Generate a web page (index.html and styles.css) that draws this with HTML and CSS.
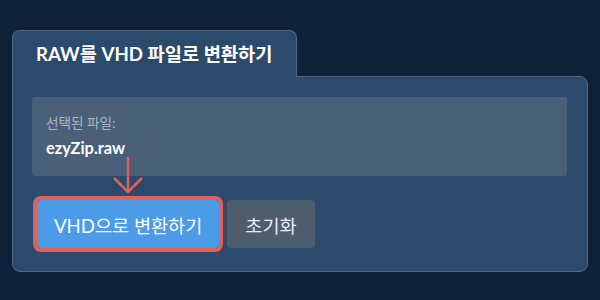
FILE: index.html
```html
<!DOCTYPE html>
<html lang="ko">
<head>
<meta charset="utf-8">
<link rel="stylesheet" href="styles.css">
</head>
<body>
<div class="wrap">
  <div class="tab">RAW를 VHD 파일로 변환하기</div>
  <div class="panel">
    <div class="info">
      <div class="label">선택된 파일:</div>
      <div class="name">ezyZip.raw</div>
    </div>
    <div class="actions">
      <div class="primary-wrap">
        <svg class="arrow" width="32" height="36" viewBox="0 0 32 36">
          <line x1="16" y1="0" x2="16" y2="34.5" stroke="#e0605a" stroke-width="2.5"/>
          <polyline points="2,21 16,35 30,21" fill="none" stroke="#e0605a" stroke-width="2.5"/>
        </svg>
        <button class="btn primary">VHD으로 변환하기</button>
      </div>
      <button class="btn secondary">초기화</button>
    </div>
  </div>
</div>
</body>
</html>
```

FILE: styles.css
```css
html, body {
  margin: 0;
  padding: 0;
  background: #0f2239;
  font-family: "Lato", "Noto Sans CJK KR", sans-serif;
}

.wrap {
  padding: 30px 12px 0 12px;
}

.tab {
  display: inline-block;
  position: relative;
  z-index: 1;
  margin-bottom: -1px;
  padding: 11px 23px 11px 23px;
  line-height: 24px;
  font-size: 18.7px;
  font-weight: 700;
  color: #ffffff;
  background: #2c4a6b;
  border: 1px solid #4f6888;
  border-bottom: none;
  border-radius: 8px 8px 0 0;
}

.panel {
  background: #2c4a6b;
  border: 1px solid #4f6888;
  border-radius: 0 8px 8px 8px;
  padding: 20px 20px 23px 19px;
}

.info {
  background: #4a6079;
  border-radius: 3px;
  padding: 16px 14px 17px 14px;
}

.label {
  font-size: 13.6px;
  line-height: 20px;
  color: #aab5c2;
}

.name {
  margin-top: 4px;
  font-size: 16.4px;
  line-height: 22px;
  font-weight: 700;
  color: #ffffff;
}

.actions {
  display: flex;
  gap: 8px;
  margin-top: 24px;
  padding-left: 5px;
}

.primary-wrap {
  position: relative;
  display: flex;
}

.arrow {
  position: absolute;
  left: 50%;
  bottom: calc(100% + 7px);
  transform: translateX(-50%);
}

.btn {
  height: 48px;
  padding: 0 16px;
  border: none;
  border-radius: 4px;
  font-family: "Lato", "Noto Sans CJK KR", sans-serif;
  font-size: 18.6px;
  color: #ffffff;
}

.primary {
  background: #4c9be7;
  outline: 4px solid #e0605a;
  outline-offset: 0;
  padding: 0 17px;
}

.secondary {
  background: #4e5d6d;
  color: #e8ecef;
  padding: 0 18px;
}
```
